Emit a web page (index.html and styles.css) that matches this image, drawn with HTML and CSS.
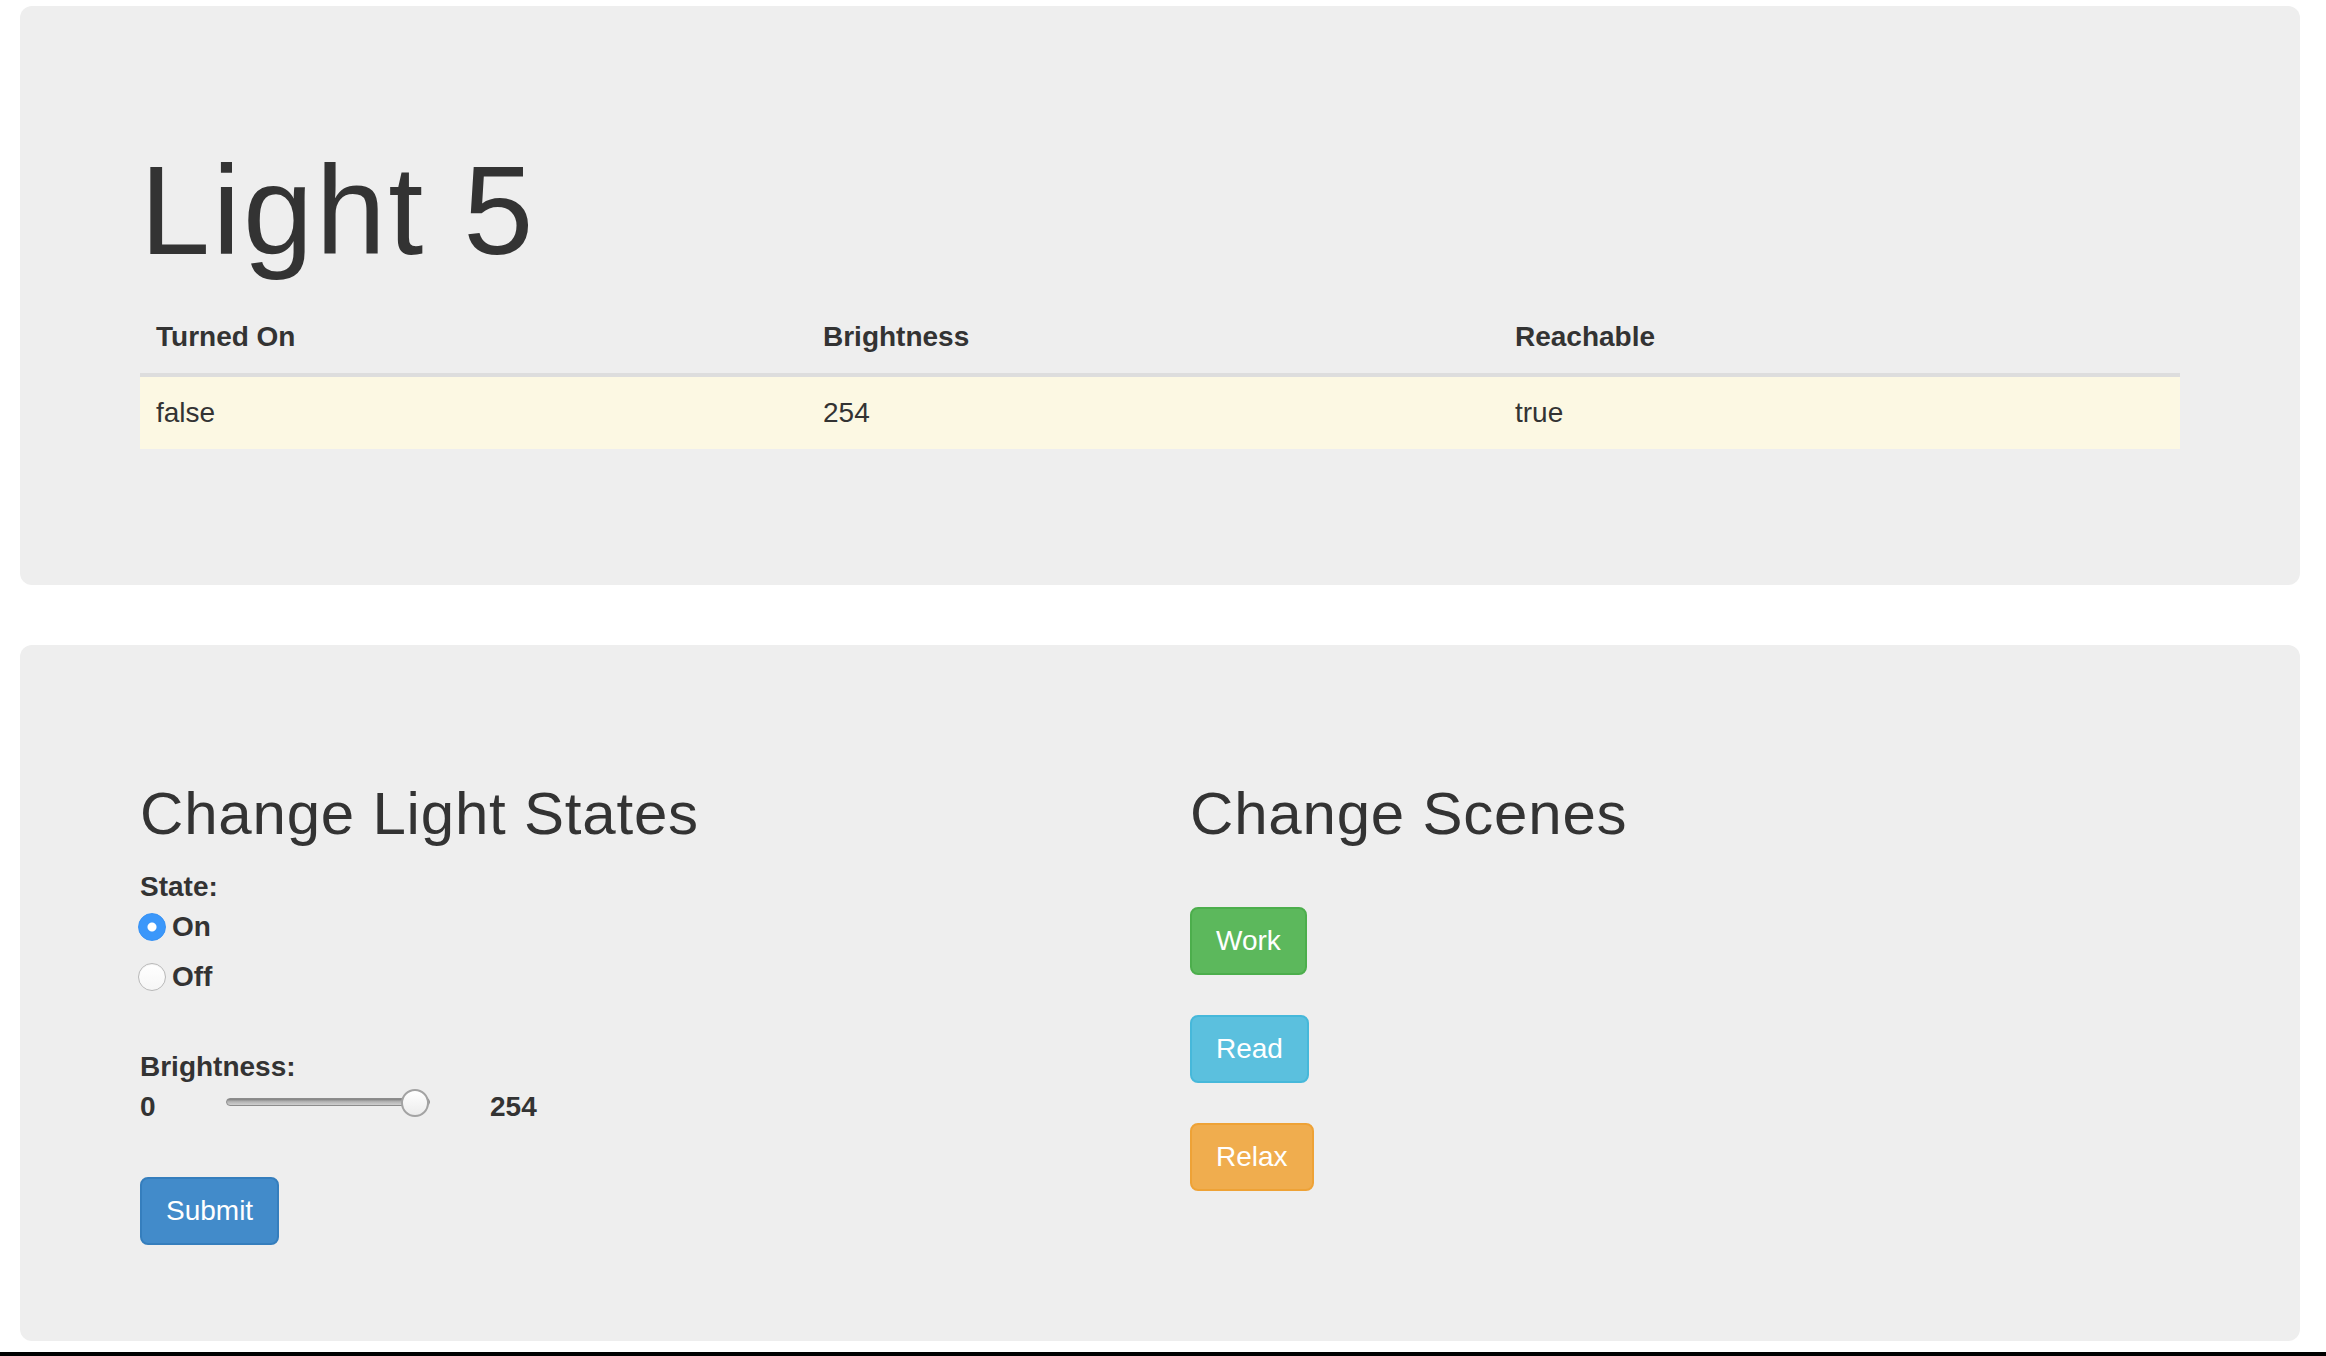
FILE: index.html
```html
<!DOCTYPE html>
<html lang="en">
<head>
<meta charset="utf-8">
<title>Light 5</title>
<link rel="stylesheet" href="styles.css">
</head>
<body>
<div class="page">
  <div class="jumbotron">
    <h1 class="title">Light 5</h1>
    <table class="status">
      <colgroup><col class="c1"><col class="c2"><col class="c3"></colgroup>
      <thead>
        <tr><th>Turned On</th><th>Brightness</th><th>Reachable</th></tr>
      </thead>
      <tbody>
        <tr class="warning"><td>false</td><td>254</td><td>true</td></tr>
      </tbody>
    </table>
  </div>

  <div class="jumbotron jumbotron-last">
    <div class="cols">
      <div class="col">
        <h2 class="section-title">Change Light States</h2>
        <form class="state-form">
          <div class="field-label">State:</div>
          <label class="radio-row"><input class="radio" type="radio" name="state" checked><span>On</span></label>
          <label class="radio-row radio-row-second"><input class="radio" type="radio" name="state"><span>Off</span></label>
          <div class="field-label field-label-spaced">Brightness:</div>
          <div class="slider-row">
            <span class="range-min">0</span>
            <input class="range" type="range" min="0" max="254" value="254">
            <span class="range-max">254</span>
          </div>
          <button type="button" class="btn btn-primary btn-submit">Submit</button>
        </form>
      </div>
      <div class="col">
        <h2 class="section-title">Change Scenes</h2>
        <div class="scene-list">
          <button type="button" class="btn btn-success">Work</button>
          <button type="button" class="btn btn-info">Read</button>
          <button type="button" class="btn btn-warning">Relax</button>
        </div>
      </div>
    </div>
  </div>
</div>
<div class="screen-edge"></div>
</body>
</html>
```

FILE: styles.css
```css
html, body {
  margin: 0;
  padding: 0;
}

body {
  background: #fff;
  color: #333;
  font-family: "Liberation Sans", Arial, Helvetica, sans-serif;
  font-size: 28px;
  line-height: 40px;
  overflow: hidden;
}

.page {
  padding: 6px 0 0 20px;
  width: 2280px;
}

.jumbotron {
  background: #eeeeee;
  border-radius: 12px;
  padding: 96px 120px;
  margin-bottom: 60px;
}

.jumbotron-last {
  margin-bottom: 11px;
}

.title {
  font-size: 126px;
  line-height: 1.1;
  font-weight: 500;
  margin: 40px 0 20px;
  letter-spacing: 2.5px;
}

.status {
  width: 100%;
  border-collapse: collapse;
  table-layout: fixed;
  margin-bottom: 40px;
}

.status .c1 { width: 667px; }
.status .c2 { width: 692px; }
.status .c3 { width: 681px; }

.status th {
  text-align: left;
  font-weight: bold;
  padding: 16px;
  line-height: 40px;
  vertical-align: bottom;
  border-bottom: 4px solid #dddddd;
}

.status td {
  padding: 16px;
  line-height: 40px;
  vertical-align: top;
}

.status .warning td {
  background: #fcf8e3;
}

.cols {
  display: grid;
  grid-template-columns: 990px 990px;
  column-gap: 60px;
  align-items: start;
}

.section-title {
  font-size: 60px;
  line-height: 1.1;
  font-weight: 500;
  margin: 40px 0 20px;
  letter-spacing: 0.8px;
}

.state-form {
  display: flex;
  flex-direction: column;
  align-items: flex-start;
}

.field-label {
  font-weight: bold;
  height: 40px;
}

.field-label-spaced {
  margin-top: 50px;
}

.radio-row {
  display: flex;
  align-items: center;
  height: 40px;
  font-weight: bold;
}

.radio-row-second {
  margin-top: 10px;
}

.radio {
  -webkit-appearance: none;
  appearance: none;
  box-sizing: border-box;
  width: 28px;
  height: 28px;
  margin: 0 6px 0 -2px;
  border-radius: 50%;
  border: 1px solid #b9b9b9;
  background: linear-gradient(#ffffff, #f6f6f6);
  box-shadow: inset 0 1px 1px rgba(0, 0, 0, 0.05);
}

.radio:checked {
  border: 1px solid #3691f4;
  background: radial-gradient(circle, #ffffff 0 4px, #3b97fa 5px);
  box-shadow: none;
}

.slider-row {
  display: flex;
  align-items: flex-start;
  height: 40px;
  font-weight: bold;
}

.range-min {
  width: 86px;
}

.range {
  -webkit-appearance: none;
  appearance: none;
  width: 204px;
  height: 28px;
  margin: 1px 0 0;
  padding: 0;
  background: transparent;
}

.range::-webkit-slider-runnable-track {
  height: 8px;
  border: 1px solid #8c8c8c;
  border-radius: 5px;
  background: linear-gradient(#7f7f7f, #b4b4b4 45%, #cfcfcf);
}

.range::-webkit-slider-thumb {
  -webkit-appearance: none;
  appearance: none;
  box-sizing: border-box;
  width: 28px;
  height: 28px;
  margin-top: -10px;
  border-radius: 50%;
  border: 2px solid #a3a3a3;
  background: linear-gradient(#ffffff, #ececec);
}

.range-max {
  margin-left: 60px;
}

.btn {
  font-family: inherit;
  font-size: 28px;
  line-height: 40px;
  font-weight: normal;
  color: #fff;
  padding: 12px 24px;
  border: 2px solid transparent;
  border-radius: 8px;
  cursor: pointer;
}

.btn-submit {
  margin-top: 50px;
}

.btn-primary {
  background: #428bca;
  border-color: #357ebd;
}

.btn-success {
  background: #5cb85c;
  border-color: #4cae4c;
}

.btn-info {
  background: #5bc0de;
  border-color: #46b8da;
}

.btn-warning {
  background: #f0ad4e;
  border-color: #eea236;
}

.scene-list {
  display: flex;
  flex-direction: column;
  align-items: flex-start;
  gap: 40px;
  padding-top: 40px;
}

.screen-edge {
  height: 5px;
  background: #000;
}
```
